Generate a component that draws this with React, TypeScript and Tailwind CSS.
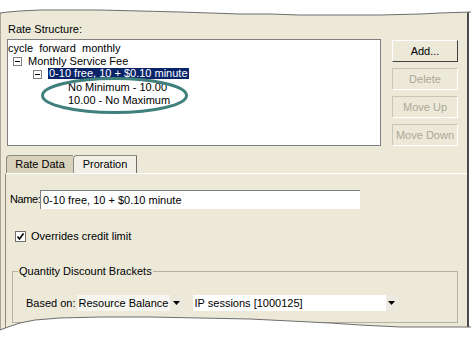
import React from "react";

const MinusBox = () => (
  <svg width="9" height="9" viewBox="0 0 9 9" className="shrink-0">
    <rect x="0.5" y="0.5" width="8" height="8" fill="#fff" stroke="#7f7f7f" />
    <line x1="2" y1="4.5" x2="7" y2="4.5" stroke="#000" />
  </svg>
);

const Arrow = () => (
  <svg width="7" height="4" viewBox="0 0 7 4">
    <path d="M0 0 H7 L3.5 4 Z" fill="#000" />
  </svg>
);

const Btn = ({ label, disabled }: { label: string; disabled?: boolean }) => (
  <div
    className={
      "w-[66px] h-[22px] flex items-center justify-center whitespace-nowrap " +
      (disabled
        ? "border border-t-[#c9c6b6] border-l-[#c9c6b6] border-b-white border-r-white text-[#aca899]"
        : "border border-t-white border-l-white border-b-[#404040] border-r-[#404040] text-black")
    }
  >
    {label}
  </div>
);

export default function App() {
  return (
    <div
      className="relative w-[471px] h-[342px] bg-white overflow-hidden text-[11px] text-black"
      style={{ fontFamily: '"Liberation Sans", Arial, sans-serif' }}
    >
      <div className="h-full w-[469px] bg-[#ece9d8] border-l border-l-[#a8a596] border-r-2 border-r-[#4a4a4a] pt-[22px]">
        <div className="pl-[6px]">
          <div className="leading-[14px] pl-[1px]">Rate Structure:</div>
          <div className="flex mt-[3px]">
            <div className="w-[374px] h-[107px] bg-white border border-[#7f7f7f] pt-[2px] leading-[13px]">
              <div className="h-[13px] whitespace-pre">cycle  forward  monthly</div>
              <div className="h-[13px] flex items-center pl-[5px]">
                <MinusBox />
                <span className="ml-[6px]">Monthly Service Fee</span>
              </div>
              <div className="h-[13px] flex items-start pl-[25px]">
                <div className="mt-[2px]">
                  <MinusBox />
                </div>
                <span className="ml-[6px] px-[1px] h-[11px] leading-[11px] bg-[#0a246a] text-white whitespace-pre">
                  0-10 free, 10 + $0.10 minute
                </span>
              </div>
              <div className="h-[13px] pl-[60px]">No Minimum - 10.00</div>
              <div className="h-[13px] pl-[60px]">10.00 - No Maximum</div>
            </div>
            <div className="ml-[11px] mt-[1px] flex flex-col gap-[6px]">
              <Btn label="Add..." />
              <Btn label="Delete" disabled />
              <Btn label="Move Up" disabled />
              <Btn label="Move Down" disabled />
            </div>
          </div>
        </div>

        <div className="flex ml-[5px] mt-[9px] h-[18px]">
          <div className="w-[67px] flex items-center justify-center bg-[#d8d2bc] border-t border-l border-[#8c8a80] rounded-tl-[4px]">
            Rate Data
          </div>
          <div className="w-[64px] flex items-center justify-center bg-[#f2f0e6] border-t border-l border-r border-t-[#8c8a80] border-l-[#8c8a80] border-r-[#6f6d66] rounded-tl-[4px]">
            Proration
          </div>
        </div>

        <div className="ml-[4px] border-t border-t-white border-l border-l-[#8c8a80] pl-[4px] pt-[16px] h-[200px]">
          <div className="flex items-center h-[19px]">
            <span className="w-[30px] tracking-[-0.4px] whitespace-nowrap">Name:</span>
            <div className="w-[320px] h-[19px] bg-white border-t border-l border-[#7f7f7f] pl-[2px] flex items-center">
              0-10 free, 10 + $0.10 minute
            </div>
          </div>

          <div className="flex items-center h-[13px] mt-[21px] pl-[5px]">
            <svg width="11" height="11" viewBox="0 0 11 11">
              <rect x="0.5" y="0.5" width="10" height="10" fill="#fff" stroke="#6f6f6f" />
              <path d="M2.5 5.5 L4.5 8 L8.5 2.5" stroke="#000" strokeWidth="1.6" fill="none" />
            </svg>
            <span className="ml-[5px]">Overrides credit limit</span>
          </div>

          <div className="relative ml-[2px] mt-[28px] w-[446px] h-[52px] border border-[#b5b2a3]">
            <span className="absolute -top-[8px] left-[5px] bg-[#ece9d8] px-[1px] leading-[14px]">
              Quantity Discount Brackets
            </span>
            <div className="flex items-center h-[16px] mt-[23px] pl-[13px]">
              <span className="whitespace-nowrap">Based on:</span>
              <div className="ml-[1px] w-[107px] h-[16px] bg-[#f6f5ef] flex items-center">
                <span className="pl-[2px] flex-1 whitespace-nowrap">Resource Balance</span>
                <div className="w-[14px] h-full flex items-center justify-center bg-[#ebe8dc]">
                  <Arrow />
                </div>
              </div>
              <div className="ml-[9px] w-[205px] h-[16px] bg-white flex items-center">
                <span className="pl-[2px] flex-1 whitespace-nowrap">IP sessions [1000125]</span>
                <div className="w-[12px] h-full flex items-center justify-center bg-[#ebe9e0]">
                  <Arrow />
                </div>
              </div>
            </div>
          </div>
        </div>
      </div>

      <svg
        className="absolute top-0 left-0 pointer-events-none"
        width="471"
        height="342"
        viewBox="0 0 471 342"
      >
        <polygon
          points="0,0 471,0 471,12 440,13 420,14 380,15 340,15 300,15 270,14 240,14 210,13 180,12 140,11 100,10 60,10 40,10 20,11 8,12 0,13"
          fill="#fff"
        />
        <polyline
          points="471,12 440,13 420,14 380,15 340,15 300,15 270,14 240,14 210,13 180,12 140,11 100,10 60,10 40,10 20,11 8,12 0,13"
          fill="none"
          stroke="#6e6e6e"
        />
        <polygon
          points="0,342 471,342 471,327 440,327 400,327 360,325 330,323 290,321 250,319 200,318 150,317 100,317 60,318 35,320 20,323 8,327 0,330"
          fill="#fff"
        />
        <polyline
          points="471,327 440,327 400,327 360,325 330,323 290,321 250,319 200,318 150,317 100,317 60,318 35,320 20,323 8,327 0,330"
          fill="none"
          stroke="#6e6e6e"
        />
        <ellipse cx="114.5" cy="95.5" rx="72" ry="17" fill="none" stroke="#3f7f7c" strokeWidth="3" />
      </svg>
    </div>
  );
}
